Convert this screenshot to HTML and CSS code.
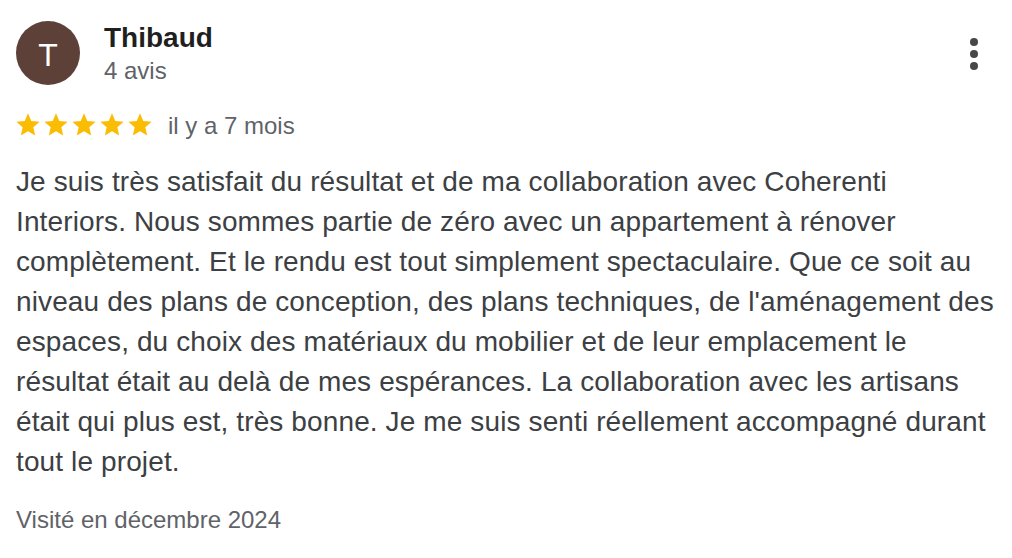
FILE: index.html
```html
<!DOCTYPE html>
<html lang="fr">
<head>
<meta charset="utf-8">
<link rel="stylesheet" href="styles.css">
</head>
<body>
<div class="review">
  <div class="header">
    <div class="avatar">T</div>
    <div class="author">
      <div class="name">Thibaud</div>
      <div class="count">4 avis</div>
    </div>
    <div class="more">
      <span class="dot"></span><span class="dot"></span><span class="dot"></span>
    </div>
  </div>
  <div class="rating">
    <div class="stars">
      <svg viewBox="0 0 24 24"><path d="M12 17.27L18.18 21l-1.64-7.03L22 9.24l-7.19-.61L12 2 9.19 8.63 2 9.24l5.46 4.73L5.82 21z"/></svg>
      <svg viewBox="0 0 24 24"><path d="M12 17.27L18.18 21l-1.64-7.03L22 9.24l-7.19-.61L12 2 9.19 8.63 2 9.24l5.46 4.73L5.82 21z"/></svg>
      <svg viewBox="0 0 24 24"><path d="M12 17.27L18.18 21l-1.64-7.03L22 9.24l-7.19-.61L12 2 9.19 8.63 2 9.24l5.46 4.73L5.82 21z"/></svg>
      <svg viewBox="0 0 24 24"><path d="M12 17.27L18.18 21l-1.64-7.03L22 9.24l-7.19-.61L12 2 9.19 8.63 2 9.24l5.46 4.73L5.82 21z"/></svg>
      <svg viewBox="0 0 24 24"><path d="M12 17.27L18.18 21l-1.64-7.03L22 9.24l-7.19-.61L12 2 9.19 8.63 2 9.24l5.46 4.73L5.82 21z"/></svg>
    </div>
    <span class="date">il y a 7 mois</span>
  </div>
  <p class="text">Je suis très satisfait du résultat et de ma collaboration avec Coherenti Interiors. Nous sommes partie de zéro avec un appartement à rénover complètement. Et le rendu est tout simplement spectaculaire. Que ce soit au niveau des plans de conception, des plans techniques, de l'aménagement des espaces, du choix des matériaux du mobilier et de leur emplacement le résultat était au delà de mes espérances. La collaboration avec les artisans était qui plus est, très bonne. Je me suis senti réellement accompagné durant tout le projet.</p>
  <div class="visited">Visité en décembre 2024</div>
</div>
</body>
</html>
```
FILE: styles.css
```css
html, body {
  margin: 0;
  padding: 0;
  background: #ffffff;
}
body {
  font-family: "Liberation Sans", Arial, Helvetica, sans-serif;
  color: #3c4043;
}
.review {
  padding: 21px 10px 0 16px;
  width: 1012px;
  box-sizing: border-box;
}
.header {
  display: flex;
  align-items: flex-start;
  gap: 24px;
}
.avatar {
  width: 64px;
  height: 64px;
  border-radius: 50%;
  background: #5d4037;
  color: #ffffff;
  display: flex;
  align-items: center;
  justify-content: center;
  font-size: 32px;
  line-height: 1;
  padding-top: 3px;
  box-sizing: border-box;
  flex: none;
}
.author {
  display: flex;
  flex-direction: column;
  margin-top: 2px;
}
.name {
  font-size: 28px;
  font-weight: 700;
  color: #1f1f1f;
  line-height: 30px;
}
.count {
  font-size: 24px;
  color: #5f6368;
  line-height: 36px;
}
.more {
  margin-left: auto;
  margin-right: 24px;
  padding-top: 17px;
  display: flex;
  flex-direction: column;
  gap: 4px;
}
.dot {
  width: 8px;
  height: 8px;
  border-radius: 50%;
  background: #474747;
}
.rating {
  display: flex;
  align-items: center;
  margin-top: 20px;
  gap: 14px;
}
.stars {
  display: flex;
  margin-left: -2px;
}
.stars svg {
  width: 28px;
  height: 28px;
  fill: #fbbc04;
}
.date {
  font-size: 24px;
  color: #5f6368;
  margin-top: 3px;
}
.text {
  margin: 22px 0 0 0;
  font-size: 28px;
  line-height: 40px;
  letter-spacing: 0.12px;
  color: #3c4043;
}
.visited {
  margin-top: 24px;
  font-size: 24px;
  color: #5f6368;
}
```
